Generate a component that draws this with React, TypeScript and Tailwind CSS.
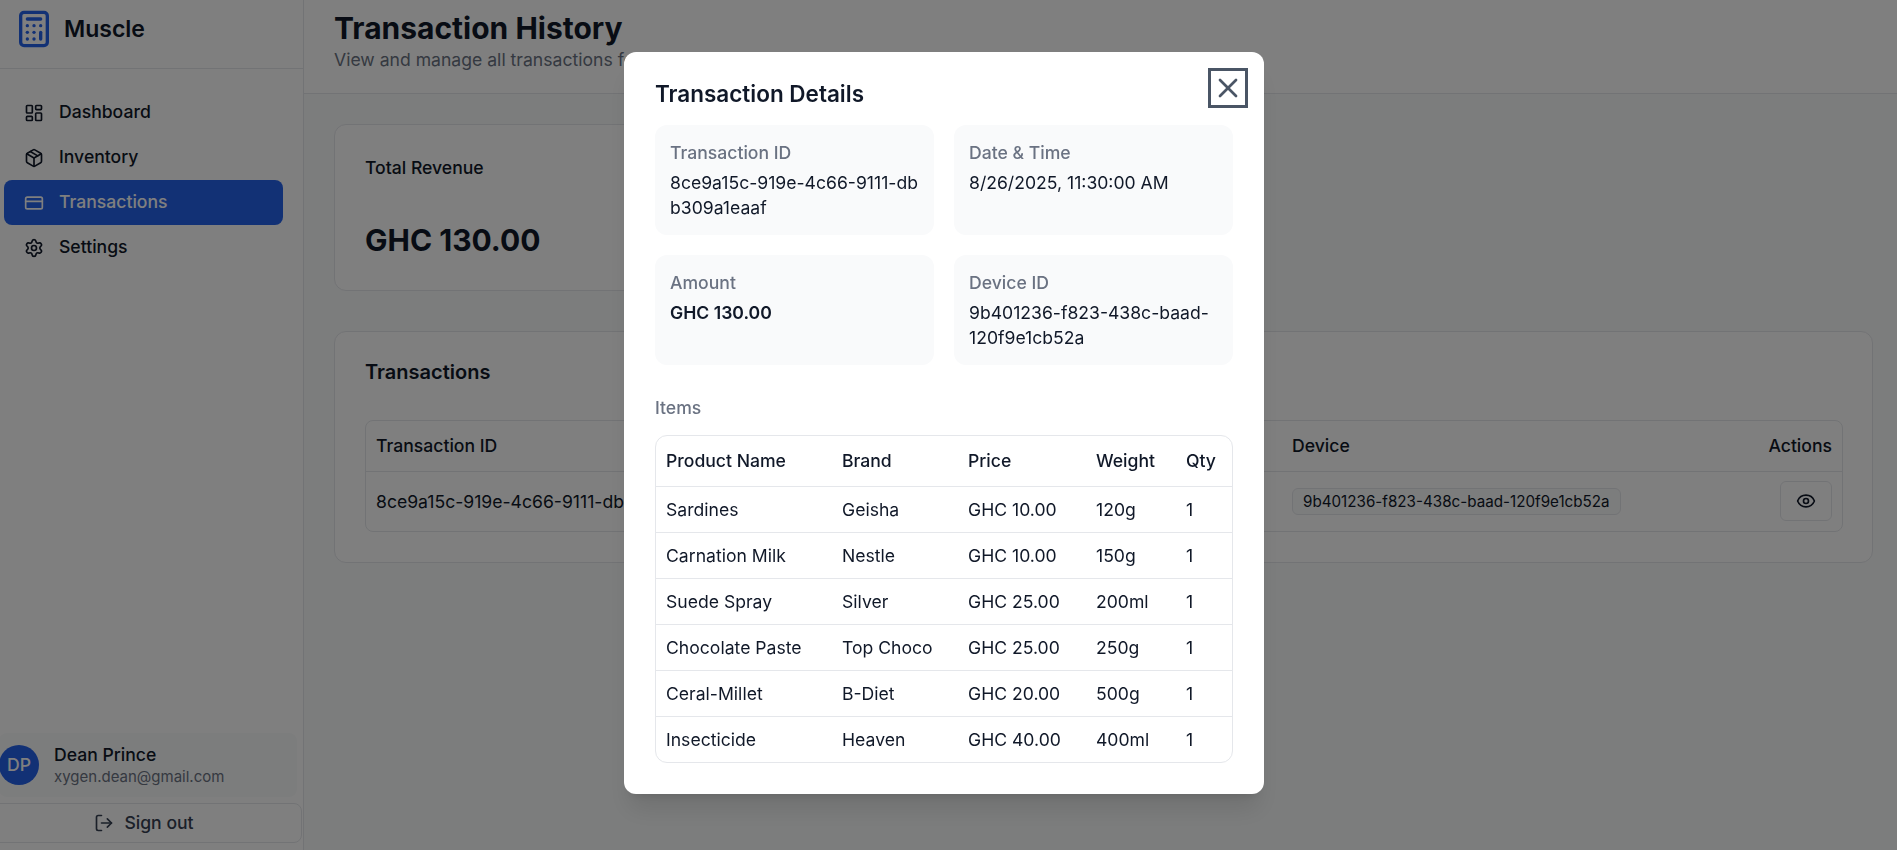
import React from "react";
import { LayoutDashboard, Package, CreditCard, Settings, LogOut, Eye, X, Calculator } from "lucide-react";

const nav = [
  { label: "Dashboard", Icon: LayoutDashboard },
  { label: "Inventory", Icon: Package },
  { label: "Transactions", Icon: CreditCard, active: true },
  { label: "Settings", Icon: Settings },
];

const items = [
  ["Sardines", "Geisha", "GHC 10.00", "120g", "1"],
  ["Carnation Milk", "Nestle", "GHC 10.00", "150g", "1"],
  ["Suede Spray", "Silver", "GHC 25.00", "200ml", "1"],
  ["Chocolate Paste", "Top Choco", "GHC 25.00", "250g", "1"],
  ["Ceral-Millet", "B-Diet", "GHC 20.00", "500g", "1"],
  ["Insecticide", "Heaven", "GHC 40.00", "400ml", "1"],
];

function Detail({ label, lines, bold }: { label: string; lines: string[]; bold?: boolean }) {
  return (
    <div className="h-[110px] rounded-xl bg-gray-50 px-[15px] pt-[15px]">
      <div className="text-[17.6px] leading-[26px] font-medium text-gray-500">{label}</div>
      <div className={`mt-[4px] text-[17.6px] leading-[25px] text-gray-900 ${bold ? "font-semibold" : ""}`}>
        {lines.map((l, i) => (
          <React.Fragment key={l}>
            {i > 0 && <br />}
            {l}
          </React.Fragment>
        ))}
      </div>
    </div>
  );
}

export default function App() {
  return (
    <div className="relative flex h-[850px] w-full overflow-hidden bg-gray-50 font-['Inter',sans-serif] text-gray-900">
      <aside className="flex h-full w-[304px] shrink-0 flex-col border-r border-gray-200 bg-white">
        <div className="flex h-[69px] items-center gap-[10px] border-b border-gray-200 pb-[11px] pl-[14px]">
          <Calculator size={40} className="text-[#2563eb]" strokeWidth={2} />
          <span className="pt-[2px] text-[23px] font-semibold">Muscle</span>
        </div>
        <nav className="mt-[21px] flex flex-col pl-1 pr-5">
          {nav.map(({ label, Icon, active }) => (
            <div
              key={label}
              className={`flex h-[45px] items-center gap-[15px] rounded-lg px-5 text-[17.6px] font-medium ${active ? "bg-[#2563eb] text-white" : "text-gray-900"}`}
            >
              <Icon size={20} />
              <span>{label}</span>
            </div>
          ))}
        </nav>
        <div className="mt-auto pb-[7px]">
          <div className="-ml-[1px] mr-[6px] flex h-[64px] items-center gap-[15px] rounded-lg bg-gray-50">
            <div className="flex h-10 w-10 items-center justify-center rounded-full bg-[#2563eb] text-[17.6px] font-medium text-white">DP</div>
            <div>
              <div className="text-[17.6px] font-medium leading-6">Dean Prince</div>
              <div className="text-[15px] leading-5 text-gray-500">xygen.dean@gmail.com</div>
            </div>
          </div>
          <div className="-ml-[14px] mr-px mt-[6px] flex h-10 items-center justify-center gap-[10px] rounded-lg border border-gray-200 text-[17.6px] font-medium text-gray-700">
            <LogOut size={20} />
            <span>Sign out</span>
          </div>
        </div>
      </aside>

      <main className="min-w-0 flex-1">
        <header className="h-[94px] border-b border-gray-200 bg-white pl-[30px] pt-[9px]">
          <h1 className="text-[30px] font-bold leading-[38px]">Transaction History</h1>
          <p className="mt-[1px] text-[17.6px] leading-6 text-gray-500">View and manage all transactions for your store</p>
        </header>
        <div className="pl-[30px] pr-6 pt-[30px]">
          <div className="grid grid-cols-3 gap-6">
            <div className="h-[167px] rounded-xl border border-gray-200 bg-white px-[30px] pt-[31px]">
              <div className="text-[17.6px] font-medium leading-6">Total Revenue</div>
              <div className="mt-[42px] text-[30px] font-bold leading-9">GHC 130.00</div>
            </div>
          </div>
          <div className="mt-[40px] h-[232px] rounded-xl border border-gray-200 bg-white pl-[30px] pr-[29px] pt-[26px]">
            <h2 className="text-xl font-semibold leading-7">Transactions</h2>
            <div className="mt-[34px] overflow-hidden rounded-lg border border-gray-200">
              <table className="w-full table-fixed border-collapse text-[17.6px]">
                <thead>
                  <tr className="h-[50px] border-b border-gray-200 text-left">
                    <th className="w-[400px] px-[10px] font-medium">Transaction ID</th>
                    <th className="w-[270px] px-[10px] font-medium">Date</th>
                    <th className="w-[245px] px-[10px] font-medium">Amount</th>
                    <th className="px-[11px] font-medium">Device</th>
                    <th className="w-[120px] px-[10px] text-right font-medium">Actions</th>
                  </tr>
                </thead>
                <tbody>
                  <tr className="h-[60px]">
                    <td className="overflow-hidden px-[10px] pt-[2px] whitespace-nowrap">8ce9a15c-919e-4c66-9111-dbb309a1eaaf</td>
                    <td className="overflow-hidden px-[10px] whitespace-nowrap">8/26/2025</td>
                    <td className="px-[10px]">GHC 130.00</td>
                    <td className="px-[11px]">
                      <span className="inline-block rounded-md border border-gray-200 bg-gray-50 px-[10px] text-[15.2px] leading-[25px] whitespace-nowrap">9b401236-f823-438c-baad-120f9e1cb52a</span>
                    </td>
                    <td className="px-[10px]">
                      <div className="ml-auto flex h-[40px] w-[52px] items-center justify-center rounded-md border border-gray-200">
                        <Eye size={20} />
                      </div>
                    </td>
                  </tr>
                </tbody>
              </table>
            </div>
          </div>
        </div>
      </main>

      <div className="fixed inset-0 flex items-start justify-center bg-black/50">
        <div className="relative ml-[-9px] mt-[52px] h-[742px] w-[640px] rounded-xl bg-white px-[31px] pt-8 shadow-xl">
          <button className="absolute right-4 top-4 flex h-10 w-10 items-center justify-center border-[3px] border-gray-600 text-gray-600">
            <X size={32} strokeWidth={2} />
          </button>
          <h2 className="text-[22.5px] font-semibold leading-[20px]">Transaction Details</h2>
          <div className="mt-[21px] grid grid-cols-2 gap-5">
            <Detail label="Transaction ID" lines={["8ce9a15c-919e-4c66-9111-db", "b309a1eaaf"]} />
            <Detail label="Date & Time" lines={["8/26/2025, 11:30:00 AM"]} />
            <Detail label="Amount" lines={["GHC 130.00"]} bold />
            <Detail label="Device ID" lines={["9b401236-f823-438c-baad-", "120f9e1cb52a"]} />
          </div>
          <div className="mt-[31px] text-[17.6px] font-medium leading-6 text-gray-500">Items</div>
          <div className="mt-[15px] overflow-hidden rounded-xl border border-gray-200">
            <table className="w-full table-fixed border-collapse text-[17.6px]">
              <thead>
                <tr className="h-[50px] border-b border-gray-200 text-left">
                  <th className="w-[176px] px-[10px] pt-[1px] font-medium">Product Name</th>
                  <th className="w-[126px] px-[10px] pt-[1px] font-medium">Brand</th>
                  <th className="w-[128px] px-[10px] pt-[1px] font-medium">Price</th>
                  <th className="w-[90px] px-[10px] pt-[1px] font-medium">Weight</th>
                  <th className="px-[10px] pt-[1px] font-medium">Qty</th>
                </tr>
              </thead>
              <tbody>
                {items.map((row) => (
                  <tr key={row[0]} className="h-[46px] border-b border-gray-200 last:border-b-0">
                    {row.map((c, i) => (
                      <td key={i} className="px-[10px] pt-[2px] whitespace-nowrap">{c}</td>
                    ))}
                  </tr>
                ))}
              </tbody>
            </table>
          </div>
        </div>
      </div>
    </div>
  );
}
